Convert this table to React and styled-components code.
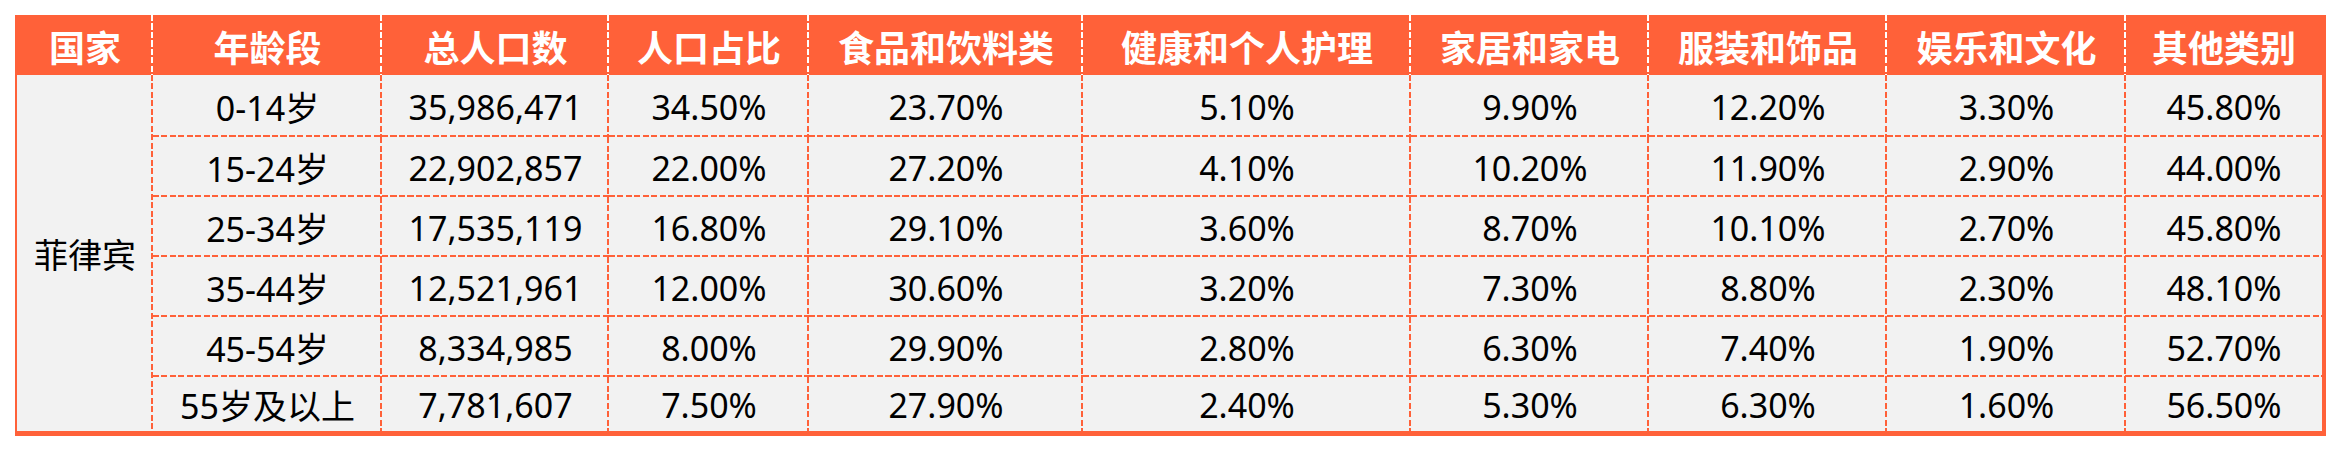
import React from 'react';
import styled, { createGlobalStyle, css } from 'styled-components';

const ORANGE = '#FF6139';
const GREY = '#F2F2F2';

const GlobalStyle = createGlobalStyle`
  html, body {
    margin: 0;
    background: #fff;
  }
  body {
    padding: 15px;
    font-family: "Noto Sans", "Noto Sans CJK SC", sans-serif;
  }
`;

const headers = [
  '国家',
  '年龄段',
  '总人口数',
  '人口占比',
  '食品和饮料类',
  '健康和个人护理',
  '家居和家电',
  '服装和饰品',
  '娱乐和文化',
  '其他类别',
];

const rows = [
  ['0-14岁', '35,986,471', '34.50%', '23.70%', '5.10%', '9.90%', '12.20%', '3.30%', '45.80%'],
  ['15-24岁', '22,902,857', '22.00%', '27.20%', '4.10%', '10.20%', '11.90%', '2.90%', '44.00%'],
  ['25-34岁', '17,535,119', '16.80%', '29.10%', '3.60%', '8.70%', '10.10%', '2.70%', '45.80%'],
  ['35-44岁', '12,521,961', '12.00%', '30.60%', '3.20%', '7.30%', '8.80%', '2.30%', '48.10%'],
  ['45-54岁', '8,334,985', '8.00%', '29.90%', '2.80%', '6.30%', '7.40%', '1.90%', '52.70%'],
  ['55岁及以上', '7,781,607', '7.50%', '27.90%', '2.40%', '5.30%', '6.30%', '1.60%', '56.50%'],
];

// dashed rules, drawn as backgrounds so the dash rhythm matches the sheet
const vDash = color =>
  `repeating-linear-gradient(to bottom, ${color} 0 6px, transparent 6px 8.5px) right top / 2px 100% no-repeat`;
const hDash = color =>
  `repeating-linear-gradient(to right, ${color} 0 6px, transparent 6px 8.5px) left bottom / 100% 2px no-repeat`;

const Sheet = styled.div`
  display: grid;
  grid-template-columns: 136px 229px 227px 200px 274px 328px 238px 238px 239px 196px;
  grid-template-rows: 60px 62px 60px 60px 60px 60px 54px;
  width: fit-content;
  padding: 0 4px 5px 2px;
  background: ${ORANGE};
`;

const centered = css`
  display: flex;
  align-items: center;
  justify-content: center;
  white-space: nowrap;
`;

const HeadCell = styled.div`
  ${centered}
  color: #fff;
  font-family: "Noto Sans CJK SC", sans-serif;
  font-weight: 700;
  font-size: 36px;
  padding-top: 1px;
  background: ${p => (p.$last ? ORANGE : `${vDash('#fff')}, ${ORANGE}`)};
`;

const CountryCell = styled.div`
  ${centered}
  grid-row: 2 / span 6;
  color: #000;
  font-family: "Noto Sans CJK SC", sans-serif;
  font-size: 34px;
  background: ${vDash(ORANGE)}, ${GREY};
`;

const Cell = styled.div`
  ${centered}
  color: #000;
  font-size: 34px;
  padding-top: 1px;
  background: ${p =>
    [
      !p.$lastCol && vDash(ORANGE),
      !p.$lastRow && hDash(ORANGE),
      GREY,
    ]
      .filter(Boolean)
      .join(', ')};
`;

export default function App() {
  return (
    <>
      <GlobalStyle />
      <Sheet>
        {headers.map((h, i) => (
          <HeadCell key={h} $last={i === headers.length - 1}>
            {h}
          </HeadCell>
        ))}
        <CountryCell>菲律宾</CountryCell>
        {rows.map((row, r) =>
          row.map((value, c) => (
            <Cell
              key={`${r}-${c}`}
              $lastCol={c === row.length - 1}
              $lastRow={r === rows.length - 1}
            >
              {value}
            </Cell>
          ))
        )}
      </Sheet>
    </>
  );
}
